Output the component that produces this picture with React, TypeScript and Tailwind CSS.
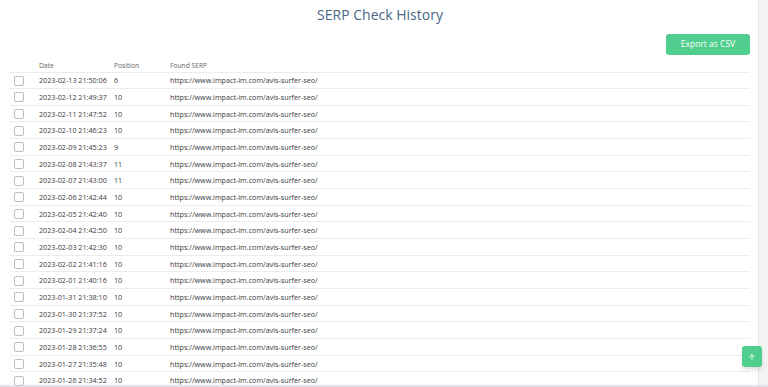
import React from 'react';
import { ArrowUp } from 'lucide-react';

const rows: [string, string][] = [
  ['2023-02-13 21:50:06', '6'],
  ['2023-02-12 21:49:37', '10'],
  ['2023-02-11 21:47:52', '10'],
  ['2023-02-10 21:46:23', '10'],
  ['2023-02-09 21:45:23', '9'],
  ['2023-02-08 21:43:37', '11'],
  ['2023-02-07 21:43:00', '11'],
  ['2023-02-06 21:42:44', '10'],
  ['2023-02-05 21:42:40', '10'],
  ['2023-02-04 21:42:50', '10'],
  ['2023-02-03 21:42:30', '10'],
  ['2023-02-02 21:41:16', '10'],
  ['2023-02-01 21:40:16', '10'],
  ['2023-01-31 21:38:10', '10'],
  ['2023-01-30 21:37:52', '10'],
  ['2023-01-29 21:37:24', '10'],
  ['2023-01-28 21:36:55', '10'],
  ['2023-01-27 21:35:48', '10'],
  ['2023-01-26 21:34:52', '10'],
];

const URL = 'https://www.impact-im.com/avis-surfer-seo/';

export default function App() {
  return (
    <div className="relative flex h-[387px] w-full overflow-hidden bg-white font-['Open_Sans',sans-serif] text-[#333]">
      <div className="flex-1 pl-[10px] pr-[8px]">
        {/* Title */}
        <h1 className="pt-[6px] text-center text-[14px] font-medium leading-[18px] text-[#4a6785]">
          SERP Check History
        </h1>

        {/* Toolbar */}
        <div className="mt-[10px] flex justify-end">
          <button className="h-[21px] w-[84px] rounded-[3px] bg-[#4fce8e] text-[8.5px] text-white">
            Export as CSV
          </button>
        </div>

        {/* Table */}
        <div className="mt-[5px]">
          <div className="flex h-[12.5px] items-center border-b border-[#ececec] text-[6.7px] text-[#666]">
            <div className="w-[29px]" />
            <div className="w-[75px]">Date</div>
            <div className="w-[56px]">Position</div>
            <div>Found SERP</div>
          </div>
          {rows.map(([date, pos]) => (
            <div
              key={date}
              className="flex h-[16.67px] items-center border-b border-[#ececec] pt-[1px] text-[7.2px] text-[#3a3a3a]"
            >
              <div className="w-[29px] pl-[4px]">
                <div className="h-[10px] w-[10px] rounded-[2px] border border-[#bdbdbd] bg-white" />
              </div>
              <div className="w-[75px] whitespace-nowrap">{date}</div>
              <div className="w-[56px]">{pos}</div>
              <div className="whitespace-nowrap">{URL}</div>
            </div>
          ))}
        </div>
      </div>

      {/* Scrollbar strip */}
      <div className="w-[10px] border-l border-[#e6e6e6] bg-[#f3f3f3]" />

      {/* Scroll to top */}
      <button className="absolute right-[6px] top-[346px] flex h-[21px] w-[20px] items-center justify-center rounded-[3px] bg-[#4fce8e] shadow-md">
        <ArrowUp className="h-[8px] w-[8px] text-white" strokeWidth={2.5} />
      </button>

      {/* Bottom edge */}
      <div className="absolute bottom-0 left-0 right-0 h-[3px] bg-gradient-to-b from-transparent to-[#d8d8de]" />
    </div>
  );
}
